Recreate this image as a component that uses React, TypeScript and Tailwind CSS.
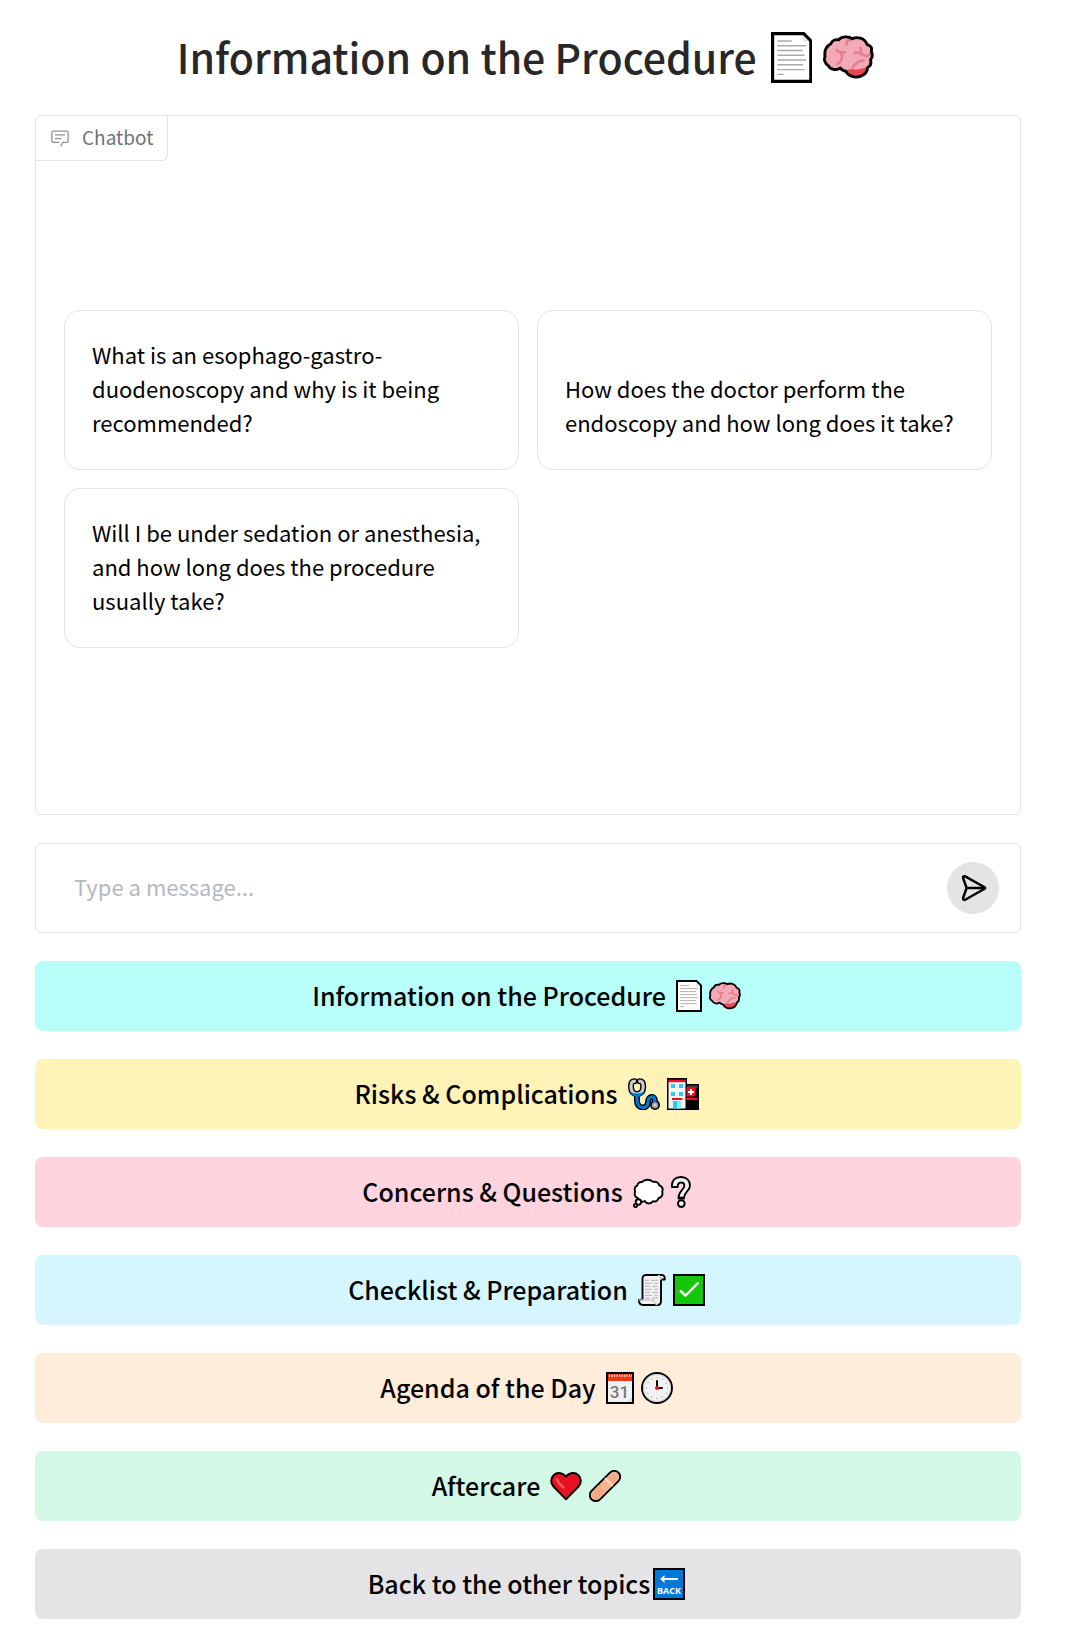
import type { ReactNode } from "react";

type GlyphProps = { className: string };

/* Every glyph is drawn on a 32-unit tall grid; its width follows its own shape. */
function Glyph({ width, className, children }: { width: number; className: string; children: ReactNode }) {
  return (
    <svg viewBox={`0 0 ${width} 32`} className={`${className} w-auto shrink-0`} aria-hidden="true" strokeLinejoin="round" strokeLinecap="round">
      {children}
    </svg>
  );
}

function PageGlyph({ className }: GlyphProps) {
  return (
    <Glyph width={26} className={className}>
      <path d="M1 1H20.5L25 5.5V31H1Z" fill="#fff" stroke="#000" strokeWidth="2" strokeLinejoin="miter" />
      <path d="M20 2V6H24Z" fill="#e4e4e4" />
      <path d="M4 5.6H13M4 8.6H22M4 11.6H20M4 14.6H21M4 17.6H22M4 20.6H20M4 23.6H21M4 26.6H8" stroke="#a9a9a9" strokeWidth="0.9" strokeLinecap="butt" />
    </Glyph>
  );
}

const brainOutline =
  "M4.9 7.4C5.7 5.3 7.8 4.5 9.8 4.9C11.4 2.9 16 2.3 18.4 4.3C21.2 2.7 26 3.5 27.8 7.9C30 8.4 31 10 30.3 12.2C31.4 14.5 30.9 16.2 29.8 17.4C30.5 19.8 29.4 21.6 28 22.3C27.7 26 24.5 28.6 20.2 28.3C17.4 28 14.8 26.4 14.4 24.6C12.8 24.4 11.5 23.6 10.9 22.6C8.6 24.2 4.6 23.7 3.3 21.1C.9 19.6.5 17 1.3 15.3C.7 12.2 1.5 9.4 4.9 7.4Z";

function BrainGlyph({ className }: GlyphProps) {
  return (
    <Glyph width={32} className={className}>
      <path d={brainOutline} fill="#f4a9b8" />
      <path d="M14.4 24.3C17 22.8 19 23.8 21.5 23.5C24 23.4 26 22 28.2 22.3C27.7 26 24.5 28.6 20.2 28.3C17.4 28 14.8 26.4 14.4 24.3Z" fill="#e74856" />
      <path d="M18.4 4.5C16 4.4 14.6 5.6 14.6 7.7M8.5 11.2C9.4 12.8 11.1 13 13.8 12.8M11.2 13C12.5 15.2 12.3 18.4 9 20M23.5 10C24 11.5 24 12.7 23.4 13.5M19.9 13.1C22.3 12.6 23.9 13.5 25.5 14.5C27 15.4 28.6 15 29.6 13.9M25.4 17.9C23 17.8 21 18.5 18.5 22.4" fill="none" stroke="#e67e8c" strokeWidth="1.7" />
      <path d={brainOutline} fill="none" stroke="#000" strokeWidth="1.8" />
    </Glyph>
  );
}

function StethoscopeGlyph({ className }: GlyphProps) {
  return (
    <Glyph width={32} className={className}>
      <path d="M9 16V23C9 31 20 32 20 24C20 18 27 17 27 23V26" fill="none" stroke="#000" strokeWidth="6" />
      <path d="M6.5 3.2C3 3.2 3 6 3 8.5C3 13.6 5 16 9 16C13 16 15.2 13.6 15.2 8.5C15.2 6 15 3.2 11.7 3.2" fill="none" stroke="#000" strokeWidth="6" />
      <circle cx="27" cy="27" r="5" fill="#000" />
      <path d="M9 16V23C9 31 20 32 20 24C20 18 27 17 27 23V25" fill="none" stroke="#0078d7" strokeWidth="3.2" />
      <path d="M6.5 3.2C3 3.2 3 6 3 8.5C3 13.6 5 16 9 16C13 16 15.2 13.6 15.2 8.5C15.2 6 15 3.2 11.7 3.2" fill="none" stroke="#ccc" strokeWidth="3.2" />
      <path d="M2 13.5C5 16 13 16 16.3 13.5C15 17.3 12 18.7 9 18.7C6 18.7 3.2 17.3 2 13.5Z" fill="#0078d7" />
      <circle cx="27" cy="27.2" r="3.3" fill="#999" />
      <circle cx="27" cy="27.2" r="1.6" fill="#ccc" />
    </Glyph>
  );
}

function HospitalGlyph({ className }: GlyphProps) {
  return (
    <Glyph width={32} className={className}>
      <path d="M0 0H20V6H32V32H0Z" fill="#000" />
      <path d="M1.5 4H18.5V30.5H1.5Z" fill="#f2f2f2" />
      <path d="M1.5 1.6H18.5V4.2H1.5Z" fill="#e81123" />
      <path d="M4 6H8V10H4ZM12 6H16V10H12ZM4 14H8V18H4ZM12 14H16V18H12Z" fill="#30c8f3" />
      <path d="M5 20H15.5V22H5ZM18.5 20H30.5V22H18.5Z" fill="#e81123" />
      <path d="M6 23H14V30.5H6Z" fill="#30c8f3" />
      <path d="M10 23H14V30.5H10Z" fill="#83eaff" />
      <path d="M20 7.5H30.5V10H20Z" fill="#444" />
      <path d="M19.5 9.5H28.5V18.5H19.5Z" fill="#e81123" />
      <path d="M24 11V17M21 14H27" stroke="#fff" strokeWidth="2" strokeLinecap="butt" />
    </Glyph>
  );
}

function ThoughtGlyph({ className }: GlyphProps) {
  return (
    <Glyph width={31} className={className}>
      <g fill="#fff" stroke="#000" strokeWidth="1.9">
        <path d="M4.4 9.3C4.7 6.7 7 5.7 9.2 6C11.2 3.1 17.2 3.1 20 5.9C23 5.2 25.7 6.5 26.1 9.1C29.1 10.3 30.4 12.9 29.2 15.5C30.2 19.2 28.5 21.8 25.7 22C24.8 25 22.2 26.2 20 25.2C17.9 28.2 13.5 28.2 11.9 25.1C8.5 26.5 5.2 25.2 5 22.2C2 21 1 18.4 2.2 15.7C1.2 13 2 10.5 4.4 9.3Z" />
        <circle cx="5.4" cy="26" r="2.7" />
        <circle cx="2.5" cy="29.5" r="1.6" />
      </g>
    </Glyph>
  );
}

function QuestionGlyph({ className }: GlyphProps) {
  return (
    <Glyph width={20} className={className}>
      <path d="M1 11C.4 4 4.5 1 10 1C15.5 1 19 4.6 19 9.6C19 15 13 16.4 13 21.6H7.6C7.6 14.6 13.4 13.6 13.4 9.8C13.4 7.8 12 6.5 10 6.5C7.8 6.5 6.6 8 6.7 11Z" fill="#f2f2f2" stroke="#000" strokeWidth="1.9" />
      <circle cx="10.3" cy="27.6" r="3.4" fill="#f2f2f2" stroke="#000" strokeWidth="1.9" />
      <path d="M7.6 22.6H13" stroke="#000" strokeWidth="2" />
    </Glyph>
  );
}

function ScrollGlyph({ className }: GlyphProps) {
  return (
    <Glyph width={28} className={className}>
      <path d="M4.5 25.5V4.5C4.5 2.2 5.8 1 8 1H24C26 1 27 2.8 26.8 5.5H23V27C23 29.8 21.5 31 19.5 31H5C2.3 31 1 29 1 26L4.5 25.5Z" fill="#f2f2f2" stroke="#000" strokeWidth="1.9" />
      <path d="M23 5.5C22.8 3 22.2 2 20.5 1.5M1.5 26H15.5C16 29 17 30 19 30.5" fill="none" stroke="#ccc" strokeWidth="1.4" />
      <path d="M7 6.3H11M13 6.3H20M7 9.3H14M16 9.3H20M7 12.3H12M14 12.3H20M7 15.3H14M16 15.3H20M7 18.3H12M14 18.3H20M7 21.3H14M16 21.3H20M7 24H12M14 24H20" stroke="#aaa" strokeWidth="0.9" strokeLinecap="butt" />
    </Glyph>
  );
}

function CheckGlyph({ className }: GlyphProps) {
  return (
    <Glyph width={32} className={className}>
      <path d="M1 1H31V31H1Z" fill="#16c60c" stroke="#000" strokeWidth="2" strokeLinejoin="miter" />
      <path d="M7 16.5L12.5 21.5L25.5 8.5" fill="none" stroke="#fff" strokeWidth="2.4" strokeLinecap="butt" strokeLinejoin="miter" />
    </Glyph>
  );
}

function CalendarGlyph({ className }: GlyphProps) {
  return (
    <Glyph width={28} className={className}>
      <path d="M1 1H27V31H1Z" fill="#f2f2f2" stroke="#000" strokeWidth="2" strokeLinejoin="miter" />
      <path d="M2 2H26V9H2Z" fill="#f03a17" />
      <path d="M3 3.8H26" stroke="#fff" strokeWidth="2" strokeDasharray="1.2 1.3" strokeLinecap="butt" />
      <path d="M26 25V30H21Z" fill="#ddd" />
      <text x="13.5" y="25.5" textAnchor="middle" fontFamily="Roboto, sans-serif" fontSize="17" fill="#767676">31</text>
    </Glyph>
  );
}

function ClockGlyph({ className }: GlyphProps) {
  return (
    <Glyph width={32} className={className}>
      <circle cx="16" cy="16" r="15" fill="#f2f2f2" stroke="#000" strokeWidth="1.9" />
      <circle cx="16" cy="16" r="13.6" fill="none" stroke="#ccc" strokeWidth="1" />
      <circle cx="16" cy="16" r="10.4" fill="none" stroke="#aaa" strokeWidth="1.3" strokeDasharray="0.1 5.345" />
      <path d="M16 16V9M16 16H21" stroke="#000" strokeWidth="2" />
      <circle cx="16" cy="16" r="2" fill="#e81123" />
    </Glyph>
  );
}

function HeartGlyph({ className }: GlyphProps) {
  return (
    <Glyph width={32} className={className}>
      <path d="M16 29.3L3.5 16.5C.3 13.2.4 8.2 3.6 5.2C7 2 12.4 2.2 16 6.6C19.6 2.2 25 2 28.4 5.2C31.6 8.2 31.7 13.2 28.5 16.5Z" fill="#e81123" stroke="#000" strokeWidth="1.9" />
      <path d="M7 9C7.5 12.5 10.5 15 13.5 17.5" fill="none" stroke="#f1594f" strokeWidth="2.6" />
    </Glyph>
  );
}

function BandageGlyph({ className }: GlyphProps) {
  return (
    <Glyph width={32} className={className}>
      <g transform="rotate(-45 16 16)">
        <rect x="-3" y="10" width="38" height="12" rx="6" fill="#f7b48f" stroke="#000" strokeWidth="1.9" />
        <path d="M10.5 11V21" stroke="#ed9b75" strokeWidth="1.2" />
        <path d="M21.5 11V21" stroke="#fde0d0" strokeWidth="1.6" />
        <path d="M1 13.5H8M1 16H8M1 18.5H8M24.5 13.5H31M24.5 16H31M24.5 18.5H31" stroke="#e07b53" strokeWidth="1" strokeDasharray="0.1 2.2" />
      </g>
    </Glyph>
  );
}

function BackGlyph({ className }: GlyphProps) {
  return (
    <Glyph width={32} className={className}>
      <path d="M1 1H31V31H1Z" fill="#0078d7" stroke="#000" strokeWidth="2" strokeLinejoin="miter" />
      <path d="M10 11H25" stroke="#fff" strokeWidth="1.9" strokeLinecap="butt" />
      <path d="M7 11L11.5 7V15Z" fill="#fff" />
      <text x="16" y="26" textAnchor="middle" fontFamily="Open Sans, sans-serif" fontWeight="700" fontSize="9" fill="#fff">BACK</text>
    </Glyph>
  );
}

function ChatIcon() {
  return (
    <svg viewBox="0 0 32 32" className="size-5 text-[#8e8e96]" fill="currentColor" aria-hidden="true">
      <path d="M17.74 30L16 29l4-7h6a2 2 0 0 0 2-2V8a2 2 0 0 0-2-2H6a2 2 0 0 0-2 2v12a2 2 0 0 0 2 2h9v2H6a4 4 0 0 1-4-4V8a4 4 0 0 1 4-4h20a4 4 0 0 1 4 4v12a4 4 0 0 1-4 4h-4.84Z" />
      <path d="M8 10h16v2H8zm0 6h10v2H8z" />
    </svg>
  );
}

function SendIcon() {
  return (
    <svg viewBox="-2 0 28 28" className="size-7" fill="none" stroke="#000" strokeWidth="2.4" strokeLinejoin="round" strokeLinecap="round" aria-hidden="true">
      <path d="M4.2 2.4L23.6 13.3C24.2 13.7 24.2 14.3 23.6 14.7L4.2 25.7C2.8 26.4 1.7 25.3 2.1 24L5.6 14L2.1 4C1.7 2.7 2.8 1.6 4.2 2.4Z" />
      <path d="M6 14H23" />
    </svg>
  );
}

const questions = [
  "What is an esophago-gastro-duodenoscopy and why is it being recommended?",
  "How does the doctor perform the endoscopy and how long does it take?",
  "Will I be under sedation or anesthesia, and how long does the procedure usually take?",
];

const topics = [
  { label: "Information on the Procedure", color: "bg-[#b8fff9]", glyphs: [PageGlyph, BrainGlyph] },
  { label: "Risks & Complications", color: "bg-[#fff3b8]", glyphs: [StethoscopeGlyph, HospitalGlyph] },
  { label: "Concerns & Questions", color: "bg-[#ffd4de]", glyphs: [ThoughtGlyph, QuestionGlyph] },
  { label: "Checklist & Preparation", color: "bg-[#d5f6ff]", glyphs: [ScrollGlyph, CheckGlyph] },
  { label: "Agenda of the Day", color: "bg-[#ffecd9]", glyphs: [CalendarGlyph, ClockGlyph] },
  { label: "Aftercare", color: "bg-[#d3f8e6]", glyphs: [HeartGlyph, BandageGlyph] },
];

const buttonClass = "flex h-[70px] w-full items-center justify-center rounded-lg pr-[3px] text-[25px] font-medium text-black";

export default function App() {
  return (
    <main className="flex flex-col gap-7 bg-white pb-8 pl-[35px] pr-14 pt-[27px] font-['Noto_Sans_CJK_SC',sans-serif]">
      <h1 className="flex h-[60px] items-center justify-center gap-3.5 pr-[5px] text-[41px] font-medium leading-[60px] text-[#27272a]">
        <span className="pb-0.5">Information on the Procedure</span>
        <span className="flex gap-[11px]">
          <PageGlyph className="h-[51px]" />
          <BrainGlyph className="h-[51px]" />
        </span>
      </h1>

      <section className="flex h-[700px] flex-col rounded-md border border-[#e4e4e7]">
        <h2 className="flex h-[45px] items-center gap-3 self-start rounded-br-md border-b border-r border-[#e4e4e7] px-3.5 text-[19px] text-[#71717a]">
          <ChatIcon />
          <span className="pb-0.5">Chatbot</span>
        </h2>
        <div className="flex flex-1 flex-col justify-center px-7 pb-[18px]">
          <div className="grid grid-cols-2 gap-[18px]">
            {questions.map((q) => (
              <button key={q} type="button" className="flex min-h-40 items-end rounded-2xl border border-[#e4e4e7] px-[27px] pb-[30px] pt-[26px] text-left text-[22px] leading-[34px] text-black">
                {q}
              </button>
            ))}
          </div>
        </div>
      </section>

      <form className="flex h-[90px] items-center rounded-md border border-[#e4e4e7] pl-[38px] pr-[21px]" onSubmit={(e) => e.preventDefault()}>
        <input type="text" aria-label="Message" placeholder="Type a message..." className="min-w-0 flex-1 bg-transparent pb-[3px] text-[22px] outline-none placeholder:text-[#b4b8c0]" />
        <button type="submit" aria-label="Send" className="flex size-[52px] items-center justify-center rounded-full bg-[#e4e4e7]">
          <SendIcon />
        </button>
      </form>

      {topics.map(({ label, color, glyphs }) => (
        <button key={label} type="button" className={`${buttonClass} ${color} gap-2.5`}>
          <span>{label}</span>
          <span className="flex gap-[7px]">
            {glyphs.map((G, i) => (
              <G key={i} className="h-8" />
            ))}
          </span>
        </button>
      ))}
      <button type="button" className={`${buttonClass} gap-[3px] bg-[#e4e4e7]`}>
        <span>Back to the other topics</span>
        <BackGlyph className="h-8" />
      </button>
    </main>
  );
}
